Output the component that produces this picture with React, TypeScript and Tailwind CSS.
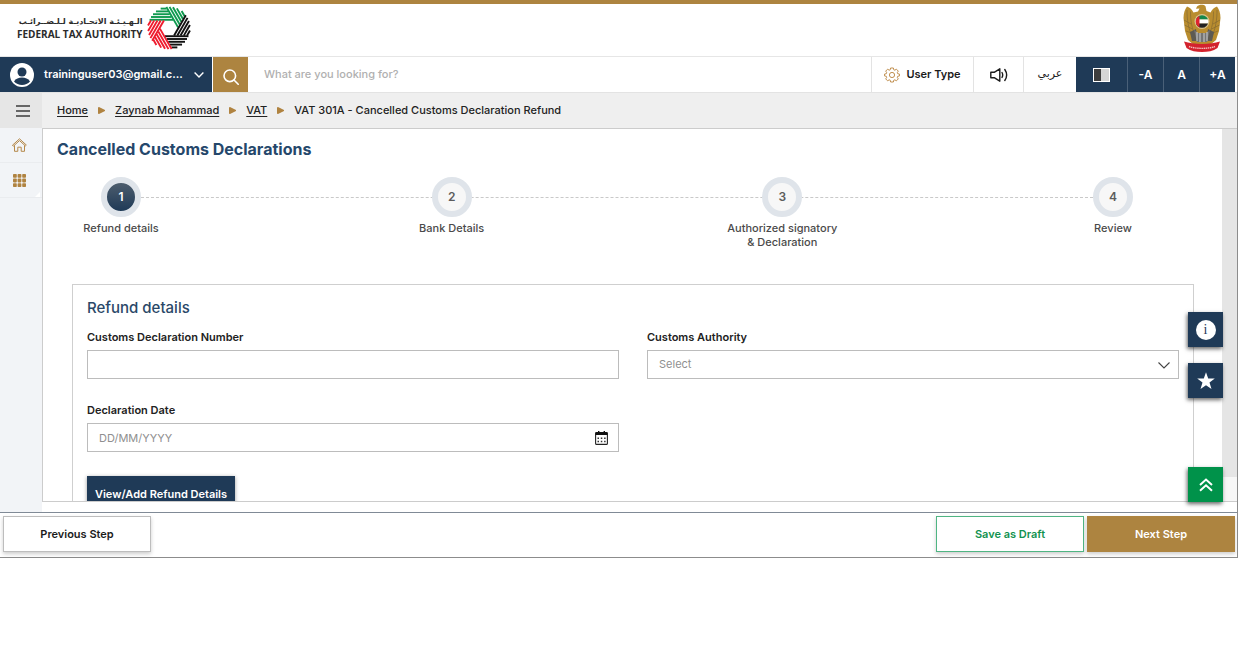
import { useState } from "react";
import clsx from "clsx";

type Step = { id: number; lines: string[] };

const steps: Step[] = [
  { id: 1, lines: ["Refund details"] },
  { id: 2, lines: ["Bank Details"] },
  { id: 3, lines: ["Authorized signatory", "& Declaration"] },
  { id: 4, lines: ["Review"] },
];

const crumbs = ["Home", "Zaynab Mohammad", "VAT"];

// six bands of parallel strokes turning around the centre
const bands = [
  { angle: 0, color: "#0f9a4f" },
  { angle: 60, color: "#0f9a4f" },
  { angle: 120, color: "#111111" },
  { angle: 180, color: "#111111" },
  { angle: 240, color: "#ee1c2e" },
  { angle: 300, color: "#ee1c2e" },
];

function FtaMark() {
  return (
    <svg viewBox="-22 -22 44 44" className="size-11" aria-hidden="true">
      {bands.map((b) => (
        <g key={b.angle} transform={`rotate(${b.angle})`} stroke={b.color} strokeWidth="1.9">
          {[0, 1, 2, 3, 4].map((i) => {
            const y = -8.2 - i * 2.8;
            return <line key={i} x1={4 - i * 1.6} y1={y} x2={-Math.sqrt(446 - y * y)} y2={y} />;
          })}
        </g>
      ))}
    </svg>
  );
}

function StateEmblem() {
  return (
    <svg viewBox="0 0 38 48" className="h-12 w-[38px]" aria-hidden="true">
      <path
        d="M14 2.5C16 .4 20.500 .2 22.500 2.200L23.500 7 27.500 8.500C29 5.500 31 3.500 34 2.500 36 5 37.500 9 37.500 14L36 27 33 36 27 41H11L5 36 2 27 .5 14C.5 9 2 5 4 2.500 7 3.500 9 5.500 10.500 8.500L15 7.500 16.500 4.500 13 4.800Z"
        fill="#b98d2f"
      />
      <g fill="none" stroke="#7d6430" strokeWidth=".6">
        <path d="M4 6c0 9 1 18 6 29M7.500 7.500c0 9 1 16 5.500 26M34 6c0 9-1 18-6 29M30.500 7.500c0 9-1 16-5.500 26" />
        <path d="M1 16l7 4M1.500 21l8 4M3 27l8 3M37 16l-7 4M36.500 21l-8 4M35 27l-8 3" />
      </g>
      <path d="M7 28l6-3 2 12H9zM31 28l-6-3-2 12h6z" fill="#5d5a52" />
      <path d="M11 26l3 12h10l3-12-4 3h-8z" fill="#747474" />
      <path d="M14 28v9M17 29v9M21 29v9M24 28v9" stroke="#d9d9d9" strokeWidth=".9" />
      <circle cx="19" cy="17.500" r="7.500" fill="#d8c48c" />
      <clipPath id="flag">
        <circle cx="19" cy="17.500" r="6.300" />
      </clipPath>
      <g clipPath="url(#flag)">
        <path d="M12 11h14v4.500H12z" fill="#16874b" />
        <path d="M12 15.500h14v4H12z" fill="#fff" />
        <path d="M12 19.500h14V25H12z" fill="#222" />
        <path d="M12 11h4.500v14H12z" fill="#e0232e" />
      </g>
      <path d="M1 37.500c5 1.500 11 2.500 18 2.500s13-1 18-2.500l-2.500 6.500C30 47 25 48 19 48S8 47 3.500 44z" fill="#d3222d" />
      <path d="M6 42.500c7 2.500 19 2.500 26 0" fill="none" stroke="#f3bdbd" strokeWidth="1.400" strokeDasharray="1.500 .6" />
    </svg>
  );
}

function UserIcon() {
  return (
    <svg viewBox="0 0 24 24" className="size-6" aria-hidden="true">
      <circle cx="12" cy="12" r="12" fill="#fff" />
      <circle cx="12" cy="9" r="4.500" fill="#1f3a57" />
      <path d="M4 18.500c2-3 4.500-4 8-4s6 1 8 4c-2 2.200-4.800 3.500-8 3.500s-6-1.300-8-3.500z" fill="#1f3a57" />
    </svg>
  );
}

function GearIcon() {
  return (
    <svg viewBox="0 0 16 16" className="size-4" fill="none" stroke="#c08f4f" strokeLinejoin="round" aria-hidden="true">
      <path d="M6.600 1h2.800l.4 1.800 1 .4 1.600-1 1.900 1.900-1 1.600.4 1 1.800.4v1.800l-1.800.4-.4 1 1 1.600-1.900 1.900-1.600-1-1 .4L9.400 15H6.600l-.4-1.800-1-.4-1.600 1-1.900-1.900 1-1.600-.4-1L.5 8.900V7.100l1.800-.4.4-1-1-1.600 1.900-1.900 1.600 1 1-.4z" />
      <circle cx="8" cy="8" r="2.600" />
    </svg>
  );
}

function SpeakerIcon() {
  return (
    <svg viewBox="0 0 18 14" className="h-[14px] w-[18px]" fill="none" stroke="#1b1b1b" strokeWidth="1.400" aria-hidden="true">
      <path d="M.8 4.300v5.400h3.400l5.600 3.500V.8L4.200 4.300z" strokeLinejoin="round" />
      <path d="M12 4.500c.9 1.600.9 3.400 0 5M14.800 1.500c2.300 3.400 2.300 7.600 0 11" strokeLinecap="round" />
    </svg>
  );
}

function HomeIcon() {
  return (
    <svg viewBox="0 0 15 14" className="h-[14px] w-[15px]" fill="none" stroke="#b5894a" strokeLinejoin="round" strokeLinecap="round" aria-hidden="true">
      <path d="M.7 7L7.500 .8 14.300 7l-.9.900-5.900-5.300L1.600 7.900z" />
      <path d="M2.500 7.700v5.600h3.300V9.200h3.400v4.100h3.300V7.700" />
    </svg>
  );
}

function GridIcon() {
  return (
    <svg viewBox="0 0 13 13" className="size-[13px]" fill="#b08340" aria-hidden="true">
      {[0, 4.6, 9.2].map((y) => [0, 4.6, 9.2].map((x) => <rect key={`${x}-${y}`} x={x} y={y} width="3.800" height="3.800" rx=".8" />))}
    </svg>
  );
}

function CalendarIcon() {
  return (
    <svg viewBox="0 0 13 14" className="h-[14px] w-[13px]" aria-hidden="true">
      <rect x=".6" y="1.600" width="11.800" height="11.800" rx="1" fill="none" stroke="#222" strokeWidth="1.100" />
      <path d="M.5 1.300h12v2.800H.5zM3 0h1.400v2H3zM8.600 0H10v2H8.600z" fill="#111" />
      <path d="M2.500 6.500h1.500v1.500H2.500zM5.800 6.500h1.500v1.500H5.800zM9.100 6.500h1.500v1.500H9.100zM2.500 9.700h1.500v1.500H2.500zM5.800 9.700h1.500v1.500H5.800zM9.100 9.700h1.500v1.500H9.100z" fill="#333" />
    </svg>
  );
}

function TopHeader() {
  return (
    <header className="flex h-[57px] shrink-0 items-start justify-between border-t-4 border-b border-t-[#ad8440] border-b-[#e6e6e6] pr-4 pl-[17px]">
      <a href="#home" className="flex items-center gap-1 pt-[2px] text-[#2b2b2b]">
        <span className="flex flex-col">
          <span dir="rtl" className="font-['DejaVu_Sans',sans-serif] text-[8px] leading-3 font-bold whitespace-nowrap">
            الـهـيـئـة الاتحـاديـة لـلـضــرائـب
          </span>
          <span className="font-['Open_Sans',sans-serif] text-[10px] leading-3 font-bold whitespace-nowrap">FEDERAL TAX AUTHORITY</span>
        </span>
        <FtaMark />
      </a>
      <StateEmblem />
    </header>
  );
}

function Toolbar() {
  return (
    <div className="flex h-9 shrink-0 items-stretch border-b border-[#e3e3e3] pr-[2px]">
      <button type="button" className="flex w-[212px] items-center bg-[#1f3a57] pl-[10px] text-[11px] font-semibold text-white">
        <UserIcon />
        <span className="ml-[10px]">traininguser03@gmail.c...</span>
        <svg viewBox="0 0 10 6" className="mr-2 ml-auto h-[6px] w-[10px]" fill="none" stroke="#fff" strokeWidth="1.400" aria-hidden="true">
          <path d="M.6.600L5 5 9.400.6" />
        </svg>
      </button>
      <form className="flex flex-1" onSubmit={(e) => e.preventDefault()}>
        <button type="submit" aria-label="Search" className="ml-px flex w-[35px] items-center justify-center bg-[#ad8440]">
          <svg viewBox="0 0 16 16" className="mt-1 size-4" fill="none" stroke="#fff" strokeWidth="1.600" strokeLinecap="round" aria-hidden="true">
            <circle cx="6.800" cy="6.800" r="5.800" />
            <path d="M11 11l4.200 4.200" />
          </svg>
        </button>
        <input
          type="search"
          aria-label="What are you looking for?"
          placeholder="What are you looking for?"
          className="min-w-0 flex-1 px-4 text-[11px] font-medium outline-none placeholder:text-[#b0b0b0]"
        />
      </form>
      <button type="button" className="flex w-[102px] items-center justify-center gap-[6px] border-l border-[#e3e3e3] text-[11px] font-semibold text-[#1b1b1b]">
        <GearIcon />
        User Type
      </button>
      <button type="button" aria-label="Read aloud" className="flex w-[50px] items-center justify-center border-l border-[#e3e3e3]">
        <SpeakerIcon />
      </button>
      <button type="button" lang="ar" className="w-[53px] border-l border-[#e3e3e3] font-['DejaVu_Sans',sans-serif] text-[11px] text-[#1b1b1b]">
        عربي
      </button>
      <button type="button" aria-label="Contrast" className="flex w-[51px] items-center justify-center bg-[#1f3a57]">
        <span className="flex h-[14px] w-[17px] border border-white bg-[#d6d6d6]">
          <span className="w-[7px] bg-[#3d3d3d]" />
        </span>
      </button>
      {["-A", "A", "+A"].map((label) => (
        <button key={label} type="button" className="w-[36px] border-l border-[#4a6078] bg-[#1f3a57] text-xs font-semibold text-white">
          {label}
        </button>
      ))}
    </div>
  );
}

function Breadcrumb() {
  return (
    <div className="flex h-[35px] shrink-0 bg-[#efefef] text-[11px] font-medium text-[#222]">
      <button type="button" aria-label="Menu" className="flex w-[42px] items-center justify-center bg-[#e6e6e6] pl-1">
        <svg viewBox="0 0 14 12" className="h-3 w-[14px]" stroke="#3c3c3c" strokeWidth="1.600" aria-hidden="true">
          <path d="M0 1h14M0 6h14M0 11h14" />
        </svg>
      </button>
      <nav aria-label="Breadcrumb" className="flex items-center pl-[15px]">
        {crumbs.map((c) => (
          <span key={c} className="flex items-center">
            <a href="#" className="underline underline-offset-2">
              {c}
            </a>
            <svg viewBox="0 0 7 7" className="mx-[10px] size-[7px]" fill="#b08340" aria-hidden="true">
              <path d="M0 .8C0 .1.600 0 1 .1L7 3v1L1 6.900C.6 7 0 6.900 0 6.200z" />
            </svg>
          </span>
        ))}
        <span>VAT 301A - Cancelled Customs Declaration Refund</span>
      </nav>
    </div>
  );
}

function Sidebar() {
  return (
    <aside className="flex w-[42px] shrink-0 flex-col bg-[#f2f4f7]">
      <a href="#dashboard" aria-label="Dashboard" className="flex h-[35px] items-center justify-center border-b border-[#eaecef] pr-1">
        <HomeIcon />
      </a>
      <a href="#services" aria-label="Services" className="relative flex h-[35px] items-center justify-center border-b border-[#eaecef] pr-1">
        <GridIcon />
        <svg viewBox="0 0 5 5" className="absolute right-[2px] bottom-0 size-[5px]" fill="#fff" aria-hidden="true">
          <path d="M5 0v5H0z" />
        </svg>
      </a>
    </aside>
  );
}

function Stepper({ current }: { current: number }) {
  return (
    <div className="mt-[18px] grid pr-[45px] pl-[14px]">
      <div className="col-start-1 row-start-1 mx-16 mt-5 self-start border-t border-dashed border-[#c9c9c9]" />
      <ol className="col-start-1 row-start-1 flex justify-between">
        {steps.map((s) => (
          <li key={s.id} className="z-10 flex w-32 flex-col items-center text-center text-[11px] leading-[14px] font-medium text-[#4a4a4a]">
            <span
              className={clsx(
                "mb-1 flex size-10 items-center justify-center rounded-full border-6 border-[#dfe4ea] text-xs font-semibold",
                s.id === current ? "bg-linear-to-b from-[#4d5d6d] to-[#1f3a57] text-white" : "bg-[#f7f7f7] text-[#5c5c5c]",
              )}
            >
              {s.id}
            </span>
            {s.lines.map((l) => (
              <span key={l}>{l}</span>
            ))}
          </li>
        ))}
      </ol>
    </div>
  );
}

function RefundForm() {
  const [authority, setAuthority] = useState("");
  const label = "mb-[5px] block text-[11px] leading-4 font-semibold text-[#222]";
  const field = "block h-[29px] w-full border border-[#bcbcbc] bg-white px-[11px] text-[11px] outline-none placeholder:text-[#8f8f8f]";

  return (
    <form className="mt-[35px] mr-7 ml-[29px] border border-[#cfcfcf] px-[14px] pt-[13px] pb-10" onSubmit={(e) => e.preventDefault()}>
      <h2 className="mb-[11px] text-[15px] leading-5 font-medium text-[#2a4868]">Refund details</h2>
      <div className="grid grid-cols-2 gap-x-7 gap-y-[23px]">
        <div>
          <label htmlFor="number" className={label}>
            Customs Declaration Number
          </label>
          <input id="number" type="text" className={field} />
        </div>
        <div>
          <label htmlFor="authority" className={label}>
            Customs Authority
          </label>
          <div className="relative">
            <select
              id="authority"
              value={authority}
              onChange={(e) => setAuthority(e.target.value)}
              className={clsx(field, "appearance-none text-[#8f8f8f]")}
            >
              <option value="">Select</option>
              <option value="dubai">Dubai Customs</option>
              <option value="abudhabi">Abu Dhabi Customs</option>
            </select>
            <svg viewBox="0 0 12 7" className="pointer-events-none absolute top-3 right-[9px] h-[7px] w-3" fill="none" stroke="#444" strokeWidth="1.100" aria-hidden="true">
              <path d="M.5.500L6 6 11.500.5" />
            </svg>
          </div>
        </div>
        <div>
          <label htmlFor="date" className={label}>
            Declaration Date
          </label>
          <div className="relative">
            <input id="date" type="text" placeholder="DD/MM/YYYY" className={field} />
            <button type="button" aria-label="Choose date" className="absolute top-2 right-[11px]">
              <CalendarIcon />
            </button>
          </div>
        </div>
      </div>
      <button type="submit" className="mt-6 h-9 w-[148px] bg-[#1f3a57] text-[11px] font-semibold text-white shadow-[0_1px_4px_rgba(0,0,0,0.4)]">
        View/Add Refund Details
      </button>
    </form>
  );
}

function FloatingTools() {
  const box = "flex size-[35px] items-center justify-center shadow-[-1px_2px_4px_rgba(0,0,0,0.6)]";
  return (
    <div className="absolute top-[183px] -right-px -bottom-px flex flex-col gap-4">
      <button type="button" aria-label="Information" className={clsx(box, "bg-[#1f3a57]")}>
        <span className="flex size-5 items-center justify-center rounded-full bg-white font-['Liberation_Serif',serif] text-sm leading-5 text-[#1f3a57]">i</span>
      </button>
      <button type="button" aria-label="Favourites" className={clsx(box, "bg-[#1f3a57]")}>
        <svg viewBox="0 0 18 18" className="size-[18px]" fill="#fff" aria-hidden="true">
          <path d="M9 .3l2.200 6.300h6.600l-5.300 4 2 6.500L9 13.200l-5.500 3.900 2-6.500-5.300-4h6.600z" />
        </svg>
      </button>
      <button type="button" aria-label="Back to top" className={clsx(box, "mt-auto bg-[#00924a]")}>
        <svg viewBox="0 0 14 14" className="size-[14px]" fill="none" stroke="#fff" strokeWidth="2" aria-hidden="true">
          <path d="M1 7l6-5.500L13 7M1 12.800l6-5.500 6 5.500" />
        </svg>
      </button>
    </div>
  );
}

export default function App() {
  return (
    <div className="bg-white font-[Inter,sans-serif]">
      <div className="flex h-[86vh] min-h-[558px] flex-col border-r border-b border-[#8c8c8c]">
        <TopHeader />
        <Toolbar />
        <Breadcrumb />
        <div className="flex min-h-0 flex-1">
          <Sidebar />
          <div className="flex min-w-0 flex-1 pb-[10px]">
            <main className="relative min-w-0 flex-1 border-t border-b border-l border-[#cccccc]">
              <div className="h-full overflow-hidden">
                <h1 className="pt-[10px] pl-[14px] text-base leading-5 font-bold text-[#25476b]">Cancelled Customs Declarations</h1>
                <Stepper current={1} />
                <RefundForm />
              </div>
              <FloatingTools />
            </main>
            <div className="flex w-[15px] flex-col border-t border-b border-[#cccccc] bg-[#f7f7f7] pb-6">
              <div className="flex-1 bg-[#e5e5e5]" />
            </div>
          </div>
        </div>
        <footer className="flex shrink-0 gap-[3px] border-t border-[#808a96] pt-[3px] pr-[2px] pb-[5px] pl-[3px] text-[11px] font-semibold">
          <button type="button" className="mr-auto h-9 w-[148px] border border-[#bdbdbd] bg-white text-[#1b1b1b] shadow-[0_2px_4px_rgba(0,0,0,0.2)]">
            Previous Step
          </button>
          <button type="button" className="h-9 w-[148px] border border-[#4fb583] bg-white text-[#12924f] shadow-[0_2px_4px_rgba(0,0,0,0.2)]">
            Save as Draft
          </button>
          <button type="button" className="h-9 w-[148px] bg-[#ad8440] text-white shadow-[0_2px_4px_rgba(0,0,0,0.2)]">
            Next Step
          </button>
        </footer>
      </div>
    </div>
  );
}
